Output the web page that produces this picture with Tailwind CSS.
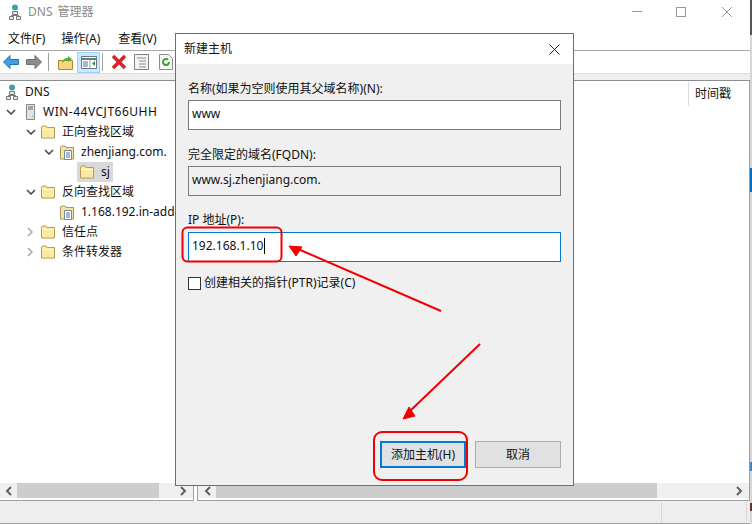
<!DOCTYPE html>
<html lang="zh">
<head>
<meta charset="utf-8">
<title>DNS 管理器</title>
<script src="https://cdn.jsdelivr.net/npm/@tailwindcss/browser@4"></script>
</head>
<body class="font-['Noto_Sans','Noto_Sans_CJK_SC',sans-serif] text-xs text-[#111] bg-white">
<svg class="hidden">
  <symbol id="folder" viewBox="0 0 14 14">
    <path d="M.5 3.500V13h13V2.500H6L5 1H1.500L.5 2z" fill="#fbe9a6" stroke="#b89b52"/>
    <path d="M1 4.500h12" stroke="#fff7d2"/>
  </symbol>
  <symbol id="zone" viewBox="0 0 14 15">
    <path d="M.5 3.500V14h13V2.500H6L5 1H1.500L.5 2z" fill="#f5e3a6" stroke="#a8955c"/>
    <path d="M4.500 5.500h7v9h-7z" fill="#fff" stroke="#7b8794"/>
    <path d="M6 8h4M6 10h4M6 12h4" stroke="#3a78b5"/>
  </symbol>
  <symbol id="dns" viewBox="0 0 12 16">
    <circle cx="6" cy="3.500" r="3" fill="#3a9bd5"/>
    <path d="M4 2.500h3v2.500H5z" fill="#4caf3f"/>
    <path d="M3.500 7.500h5v3h-5zM.5 12.500h4v3h-4zM7.500 12.500h4v3h-4z" fill="#e8e8e8" stroke="#777"/>
    <path d="M6 10.500v1H2.500v1M6 11.500h3.500v1" fill="none" stroke="#777"/>
  </symbol>
  <symbol id="chev-down" viewBox="0 0 10 6"><path d="M1 1l4 4 4-4" fill="none" stroke="#444" stroke-width="1.500"/></symbol>
  <symbol id="chev-right" viewBox="0 0 6 10"><path d="M1 1l4 4-4 4" fill="none" stroke="#a6a6a6" stroke-width="1.500"/></symbol>
  <symbol id="sb-left" viewBox="0 0 7 10"><path d="M6 1L2 5l4 4" fill="none" stroke="#606060" stroke-width="2"/></symbol>
  <symbol id="sb-right" viewBox="0 0 7 10"><path d="M1 1l4 4-4 4" fill="none" stroke="#606060" stroke-width="2"/></symbol>
</svg>

<div class="relative w-[752px] h-[524px] overflow-hidden flex">
  <div class="w-[750px] h-[524px] flex flex-col shrink-0">

    <!-- titlebar -->
    <div class="h-[23px] flex items-center shrink-0 relative">
      <svg class="w-3 h-4 ml-[9px]"><use href="#dns"/></svg>
      <span class="ml-[7px] text-[#8a8a8a] leading-none [word-spacing:2px]">DNS 管理器</span>
      <div class="ml-auto flex items-center">
        <div class="w-[10px] h-px bg-[#999] mr-[34px]"></div>
        <div class="w-[10px] h-[10px] border border-[#999] mr-[36px]"></div>
        <svg class="w-[10px] h-[10px] mr-[18px]" viewBox="0 0 10 10"><path d="M0 0l10 10M10 0L0 10" stroke="#999"/></svg>
      </div>
    </div>

    <!-- menu -->
    <div class="h-[27px] flex items-center shrink-0 pl-2 gap-[16px] pt-[4px]">
      <span>文件(F)</span><span>操作(A)</span><span class="ml-[2px]">查看(V)</span>
    </div>

    <!-- toolbar -->
    <div class="h-[23px] border-t border-[#aaa] flex items-center shrink-0 relative">
      <svg class="w-4 h-[14px] ml-[3px]" viewBox="0 0 16 14"><path d="M7 .500L.500 7 7 13.500V9.500h8.500v-5H7z" fill="#3fa0e0" stroke="#2379b8"/></svg>
      <svg class="w-4 h-[14px] ml-[7px]" viewBox="0 0 16 14"><path d="M9 .500L15.500 7 9 13.500V9.500H.5v-5H9z" fill="#8c8c8c" stroke="#6e6e6e"/></svg>
      <div class="w-px h-[18px] bg-[#a0a0a0] ml-[6px]"></div>
      <svg class="w-[15px] h-[15px] ml-[9px]" viewBox="0 0 15 15"><path d="M.5 5.500h14v9H.5z" fill="#f2d77e" stroke="#a8892f"/><path d="M4 8c1-4 3-5 6-5V1l4 3-4 3V5C8 5 6 6 4 8z" fill="#4caf3f"/></svg>
      <div class="w-[23px] h-[21px] bg-[#cce8ff] border border-[#99d1ff] ml-[4px] flex items-center justify-center">
        <svg class="w-4 h-[13px]" viewBox="0 0 16 13"><path d="M.5.500h15v12H.5z" fill="#fff" stroke="#6b7680"/><path d="M.5 3h15" stroke="#6b7680" stroke-width="2"/><path d="M9 3.500v9" stroke="#9aa5ae"/><path d="M2 6h5M2 8h5M2 10h5" stroke="#3a78b5"/><path d="M14 5v5l-3-2.500z" fill="#2f8f4a"/></svg>
      </div>
      <div class="w-px h-[18px] bg-[#a0a0a0] ml-[2px]"></div>
      <svg class="w-4 h-4 ml-2" viewBox="0 0 16 16"><path d="M2 2l12 12M14 2L2 14" stroke="#d8232a" stroke-width="3.500"/></svg>
      <svg class="w-[15px] h-4 ml-[7px]" viewBox="0 0 15 16"><path d="M.5.500h14v15H.5z" fill="#f4f4f4" stroke="#808080"/><path d="M3 4h9M5 7h7M5 10h7M5 13h7" stroke="#8c8c8c"/></svg>
      <svg class="w-[14px] h-4 ml-[10px]" viewBox="0 0 14 16"><path d="M.5.500h9l4 4v11H.5z" fill="#f7f7f7" stroke="#8c8c8c"/><path d="M10 8a3 3 0 1 1-1-2.200" fill="none" stroke="#3da13d" stroke-width="2"/></svg>
    </div>
    <div class="h-[7px] bg-[#eee] border-t border-[#ddd] shrink-0"></div>

    <!-- panes -->
    <div class="h-[421px] flex border-t border-[#8a8f94] shrink-0">
      <div class="w-[194px] flex flex-col border-r border-b border-[#a0a0a0] shrink-0">
        <div class="flex-1 pt-[1px]">
          <div class="h-5 flex items-center"><svg class="w-3 h-4 ml-[6px] shrink-0"><use href="#dns"/></svg><span class="ml-[7px]">DNS</span></div>
          <div class="h-5 flex items-center">
            <svg class="w-[10px] h-[6px] ml-[6px] shrink-0"><use href="#chev-down"/></svg>
            <svg class="w-[9px] h-4 ml-[10px] shrink-0" viewBox="0 0 9 16"><path d="M.5.500h8v15h-8z" fill="#dfe3e6" stroke="#7f8a92"/><path d="M2 3h5M2 5h5" stroke="#5f6a72"/><path d="M6 12h1" stroke="#3fae3f"/></svg>
            <span class="ml-[8px] whitespace-nowrap tracking-[0.5px]">WIN-44VCJT66UHH</span>
          </div>
          <div class="h-5 flex items-center pl-[26px]">
            <svg class="w-[10px] h-[6px] shrink-0"><use href="#chev-down"/></svg>
            <svg class="w-[14px] h-[14px] ml-[5px] shrink-0"><use href="#folder"/></svg>
            <span class="ml-[7px]">正向查找区域</span>
          </div>
          <div class="h-5 flex items-center pl-[44px]">
            <svg class="w-[10px] h-[6px] shrink-0"><use href="#chev-down"/></svg>
            <svg class="w-[14px] h-[15px] ml-[6px] shrink-0"><use href="#zone"/></svg>
            <span class="ml-[7px] whitespace-nowrap">zhenjiang.com.</span>
          </div>
          <div class="h-5 flex items-center pl-[77px]">
            <div class="h-5 w-[36px] bg-[#d9d9d9] flex items-center pl-[3px]">
              <svg class="w-[14px] h-[14px] shrink-0"><use href="#folder"/></svg>
              <span class="ml-[7px]">sj</span>
            </div>
          </div>
          <div class="h-5 flex items-center pl-[26px]">
            <svg class="w-[10px] h-[6px] shrink-0"><use href="#chev-down"/></svg>
            <svg class="w-[14px] h-[14px] ml-[5px] shrink-0"><use href="#folder"/></svg>
            <span class="ml-[7px]">反向查找区域</span>
          </div>
          <div class="h-5 flex items-center pl-[60px]">
            <svg class="w-[14px] h-[15px] shrink-0"><use href="#zone"/></svg>
            <span class="ml-[7px] whitespace-nowrap">1.168.192.in-addr.arpa</span>
          </div>
          <div class="h-5 flex items-center pl-[27px]">
            <svg class="w-[6px] h-[10px] shrink-0"><use href="#chev-right"/></svg>
            <svg class="w-[14px] h-[14px] ml-[8px] shrink-0"><use href="#folder"/></svg>
            <span class="ml-[7px]">信任点</span>
          </div>
          <div class="h-5 flex items-center pl-[27px]">
            <svg class="w-[6px] h-[10px] shrink-0"><use href="#chev-right"/></svg>
            <svg class="w-[14px] h-[14px] ml-[8px] shrink-0"><use href="#folder"/></svg>
            <span class="ml-[7px]">条件转发器</span>
          </div>
        </div>
        <div class="h-[15px] mb-[2px] bg-[#f0f0f0] flex items-center shrink-0">
          <div class="w-[17px] flex justify-center"><svg class="w-[7px] h-[10px]"><use href="#sb-left"/></svg></div>
          <div class="w-[142px] h-[15px] bg-[#cdcdcd]"></div>
          <div class="flex-1 flex justify-end pr-[6px]"><svg class="w-[7px] h-[10px]"><use href="#sb-right"/></svg></div>
        </div>
      </div>
      <div class="w-[3px] shrink-0"></div>
      <div class="flex-1 flex flex-col border-l border-b border-r border-[#a0a0a0]">
        <div class="flex-1">
          <div class="ml-[490px] mt-[1px] h-6 border-l border-[#ddd] pl-[6px] flex items-center">时间戳</div>
        </div>
        <div class="h-[15px] mb-[2px] bg-[#f0f0f0] flex items-center shrink-0">
          <div class="w-[18px] flex justify-center"><svg class="w-[7px] h-[10px]"><use href="#sb-left"/></svg></div>
          <div class="w-[441px] h-[15px] bg-[#cdcdcd]"></div>
          <div class="flex-1 flex justify-end pr-[6px]"><svg class="w-[7px] h-[10px]"><use href="#sb-right"/></svg></div>
        </div>
      </div>
    </div>

    <!-- status bar -->
    <div class="flex-1 bg-[#eee] border-b border-[#a0a0a0] flex">
      <div class="w-[662px] border-r border-[#d8d8d8] my-[1px]"></div>
      <div class="w-[85px] border-r border-[#d8d8d8] my-[1px]"></div>
    </div>
  </div>

  <!-- sliver of the window behind -->
  <div class="w-[2px] h-[524px] flex flex-col bg-[#d6d6d6] shrink-0">
    <div class="h-[35px] bg-[#555]"></div>
    <div class="h-[133px]"></div>
    <div class="h-[24px] bg-[#0a6ebd]"></div>
    <div class="h-[270px]"></div>
    <div class="h-[9px] bg-[#3d86c6]"></div>
    <div class="h-[32px]"></div>
    <div class="h-[8px] bg-[#5a3a2a]"></div>
  </div>

  <!-- dialog -->
  <div class="absolute left-[175px] top-[33px] w-[399px] h-[453px] border border-[#2b7fc4] bg-[#f0f0f0] flex flex-col">
    <div class="h-[30px] bg-white flex items-center justify-between pl-2 pr-[13px] shrink-0">
      <span class="text-[#111]">新建主机</span>
      <svg class="w-[11px] h-[11px]" viewBox="0 0 11 11"><path d="M.5.500l10 10M10.500.500l-10 10" stroke="#222"/></svg>
    </div>
    <div class="flex-1 flex flex-col pl-3 pr-3">
      <label class="mt-[16px] h-[18px] leading-[18px]">名称(如果为空则使用其父域名称)(N):</label>
      <div class="mt-[2px] h-[30px] w-[373px] bg-white border border-[#7a7a7a] flex items-center px-[3px] pb-[3px] shrink-0">www</div>
      <label class="mt-[16px] h-[18px] leading-[18px]">完全限定的域名(FQDN):</label>
      <div class="mt-[2px] h-[30px] w-[373px] bg-[#f0f0f0] border border-[#7a7a7a] flex items-center px-[3px] pb-[3px] shrink-0">www.sj.zhenjiang.com.</div>
      <label class="mt-[15px] h-[18px] leading-[18px]">IP 地址(P):</label>
      <div class="mt-[3px] h-[30px] w-[373px] bg-white border border-[#0078d7] flex items-center px-[3px] pb-[3px] shrink-0">192.168.1.10<span class="w-px h-4 bg-black ml-px"></span></div>
      <div class="mt-[14px] h-[14px] flex items-center gap-[3px] shrink-0">
        <span class="w-[13px] h-[13px] bg-white border border-[#333] shrink-0"></span>
        <span>创建相关的指针(PTR)记录(C)</span>
      </div>
      <div class="mt-auto mb-[17px] flex pl-[192px] gap-[9px]">
        <button class="w-[86px] h-[27px] bg-[#e1e1e1] border-2 border-[#0078d7]">添加主机(H)</button>
        <button class="w-[86px] h-[27px] bg-[#e1e1e1] border border-[#adadad]">取消</button>
      </div>
    </div>
  </div>

  <!-- red annotations -->
  <svg class="absolute left-0 top-0 w-[752px] h-[524px] pointer-events-none" viewBox="0 0 752 524" fill="none" stroke="#f00000" stroke-width="2">
    <rect x="182.500" y="227.500" width="99" height="34" rx="5"/>
    <rect x="374" y="432" width="93" height="48" rx="8"/>
    <path d="M441 311L298 249"/>
    <path d="M289 246l13 1-6 9z" fill="#f00000" stroke-width="1"/>
    <path d="M480 344L410 411"/>
    <path d="M403 419l6-12 6 9z" fill="#f00000" stroke-width="1"/>
  </svg>
</div>
</body>
</html>
